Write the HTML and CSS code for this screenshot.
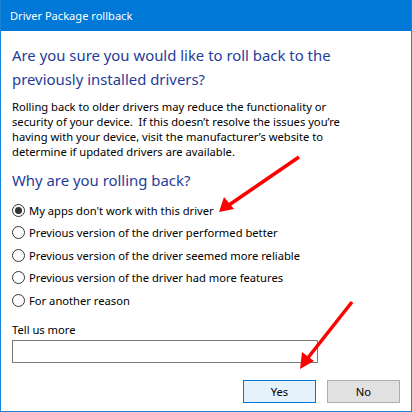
FILE: index.html
```html
<!DOCTYPE html>
<html>
<head>
<meta charset="utf-8">
<link rel="stylesheet" href="styles.css">
</head>
<body>
<div class="window">
  <div class="titlebar">Driver Package rollback</div>
  <div class="content">
    <h1 class="main">Are you sure you would like to roll back to the<br>previously installed drivers?</h1>
    <p class="desc">Rolling back to older drivers may reduce the functionality or<br>security of your device.&nbsp; If this doesn’t resolve the issues you’re<br>having with your device, visit the manufacturer’s website to<br>determine if updated drivers are available.</p>
    <h2 class="main sub">Why are you rolling back?</h2>
    <div class="options">
      <div class="opt"><span class="radio checked"></span><span>My apps don't work with this driver</span></div>
      <div class="opt"><span class="radio"></span><span>Previous version of the driver performed better</span></div>
      <div class="opt"><span class="radio"></span><span>Previous version of the driver seemed more reliable</span></div>
      <div class="opt"><span class="radio"></span><span>Previous version of the driver had more features</span></div>
      <div class="opt"><span class="radio"></span><span>For another reason</span></div>
    </div>
    <div class="label">Tell us more</div>
    <div class="input"></div>
    <div class="buttons">
      <div class="btn yes">Yes</div>
      <div class="btn no">No</div>
    </div>
  </div>
  <svg class="arrows" width="412" height="412" viewBox="0 0 412 412">
    <line x1="299" y1="157" x2="229" y2="205" stroke="#ff0000" stroke-width="3.5"/>
    <polygon points="219,212 224,197 234,209" fill="#ff0000"/>
    <line x1="352" y1="302" x2="307" y2="359" stroke="#ff0000" stroke-width="3.5"/>
    <polygon points="300,369 302,352 314,361" fill="#ff0000"/>
  </svg>
</div>
</body>
</html>
```
FILE: styles.css
```css
html, body {
  margin: 0;
  padding: 0;
  background: #ffffff;
}
.window {
  position: relative;
  width: 412px;
  height: 412px;
  box-sizing: border-box;
  border: 1px solid #1883d7;
  border-top: none;
  background: #fff;
  font-family: "Noto Sans", "Open Sans", sans-serif;
  font-size: 11.2px;
  color: #000;
  overflow: hidden;
}
.titlebar {
  height: 31px;
  margin: 0 -1px;
  background: #0078d7;
  color: #fff;
  font-size: 11.1px;
  line-height: 31px;
  padding-left: 10px;
}
.content {
  padding: 12px 0 0 11px;
  display: flex;
  flex-direction: column;
}
.main {
  margin: 0;
  font-weight: normal;
  font-size: 14.9px;
  line-height: 24px;
  color: #1f3d99;
}
.desc {
  margin: 8px 0 0 0;
  line-height: 15px;
}
.sub {
  margin-top: 9px;
}
.options {
  margin-top: 7px;
  display: flex;
  flex-direction: column;
}
.opt {
  height: 22.5px;
  display: flex;
  align-items: center;
  gap: 4px;
}
.radio {
  width: 13px;
  height: 13px;
  box-sizing: border-box;
  border: 1px solid #333;
  border-radius: 50%;
  display: flex;
  align-items: center;
  justify-content: center;
  flex: none;
}
.radio.checked::after {
  content: "";
  width: 7px;
  height: 7px;
  border-radius: 50%;
  background: #333;
}
.label {
  margin-top: 10px;
  line-height: 15px;
}
.input {
  margin-top: 3px;
  width: 306px;
  height: 23px;
  box-sizing: border-box;
  border: 1px solid #7a7a7a;
}
.buttons {
  margin-top: 17px;
  display: flex;
  justify-content: flex-end;
  gap: 11px;
  padding-right: 11px;
}
.btn {
  width: 73px;
  height: 23px;
  box-sizing: border-box;
  display: flex;
  align-items: center;
  justify-content: center;
}
.yes {
  border: 1px solid #0078d7;
  background: #e5f1fb;
}
.no {
  border: 1px solid #adadad;
  background: #e1e1e1;
}
.arrows {
  position: absolute;
  left: -1px;
  top: 0;
  pointer-events: none;
}
```
